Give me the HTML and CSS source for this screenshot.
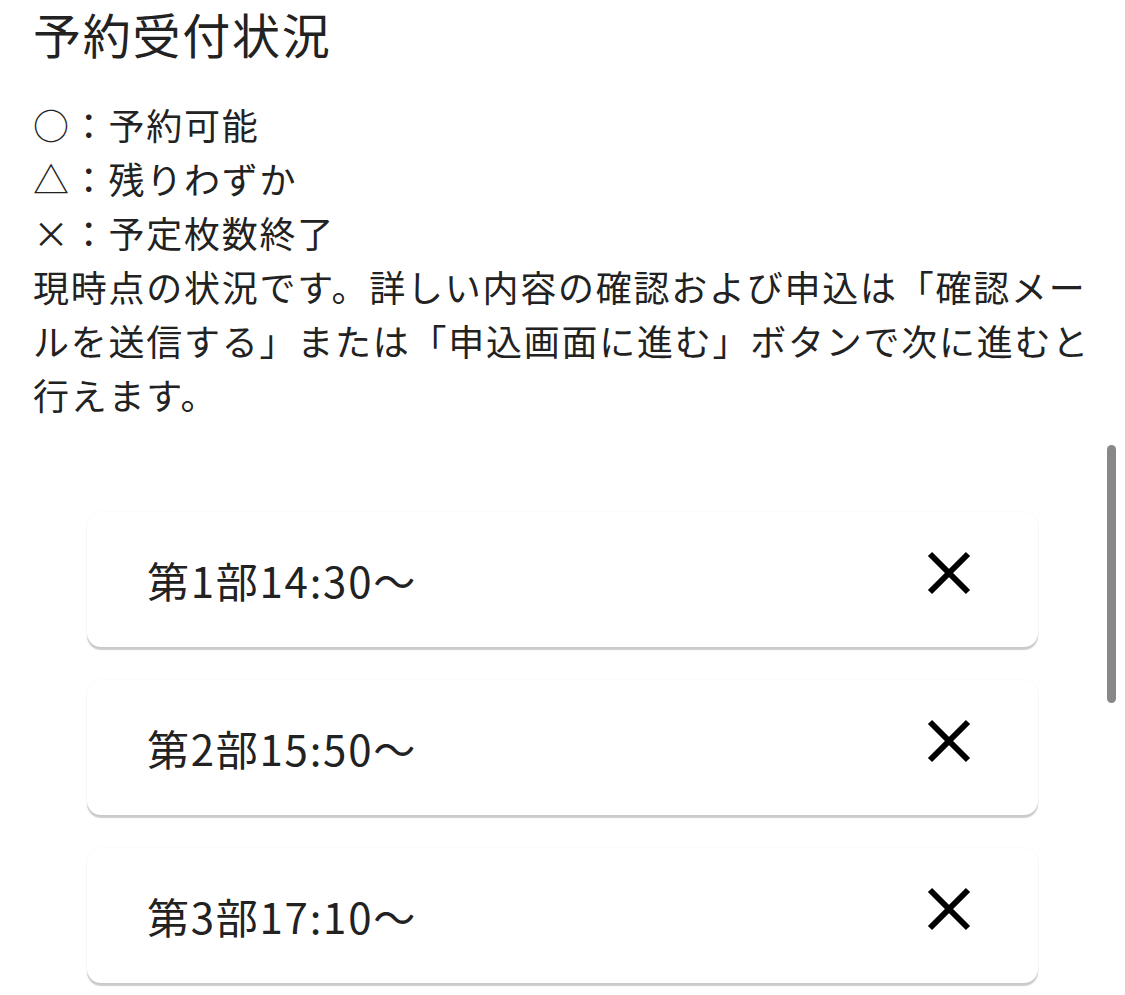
FILE: index.html
```html
<!DOCTYPE html>
<html lang="ja">
<head>
    <meta charset="UTF-8">
    <meta name="viewport" content="width=device-width, initial-scale=1.0">
    <title>予約受付状況</title>
    <link rel="stylesheet" href="styles.css">
</head>
<body>
    <div class="content">
        <h1>予約受付状況</h1>

        <p class="note">
            ○：予約可能<br>
            △：残りわずか<br>
            ×：予定枚数終了<br>
            現時点の状況です。詳しい内容の確認および申込は「確認メールを送信する」または「申込画面に進む」ボタンで次に進むと行えます。
        </p>

        <ul class="slots">
            <li class="slot">
                <span class="slot-name">第1部14:30〜</span>
                <svg class="mark" viewBox="0 0 46 46" aria-label="×"><path d="M4 4L42 42M42 4L4 42"/></svg>
            </li>
            <li class="slot">
                <span class="slot-name">第2部15:50〜</span>
                <svg class="mark" viewBox="0 0 46 46" aria-label="×"><path d="M4 4L42 42M42 4L4 42"/></svg>
            </li>
            <li class="slot">
                <span class="slot-name">第3部17:10〜</span>
                <svg class="mark" viewBox="0 0 46 46" aria-label="×"><path d="M4 4L42 42M42 4L4 42"/></svg>
            </li>
        </ul>
    </div>

    <!-- overlay scroll indicator -->
    <div class="scroll-thumb"></div>
</body>
</html>
```

FILE: styles.css
```css
body {
    font-family: 'Noto Sans CJK JP', 'Noto Sans', sans-serif;
    margin: 0;
    padding: 0;
    background: #fff;
    color: #222;
    letter-spacing: 1.75px;
}

.content {
    padding: 0 33px;
}

h1 {
    margin: 0 0 31px;
    font-size: 48px;
    font-weight: normal;
    line-height: 66px;
}

.note {
    margin: 0;
    font-size: 36px;
    line-height: 54px;
}

.slots {
    list-style: none;
    margin: 91px 54px 0;
    padding: 0;
}

.slot {
    display: flex;
    justify-content: space-between;
    align-items: center;
    height: 135px;
    margin-bottom: 33px;
    padding: 0 66px 0 60px;
    background: #fff;
    border-radius: 14px;
    box-shadow: 0 3px 1px rgba(0, 0, 0, 0.2), 0 0 2px rgba(0, 0, 0, 0.06);
}

.slot-name {
    font-size: 42px;
}

.mark {
    width: 46px;
    height: 46px;
    margin-top: -14px;
}

.mark path {
    stroke: #000;
    stroke-width: 6;
    fill: none;
}

.scroll-thumb {
    position: fixed;
    top: 445px;
    right: 9px;
    width: 9px;
    height: 258px;
    border-radius: 5px;
    background: #888;
}
```
